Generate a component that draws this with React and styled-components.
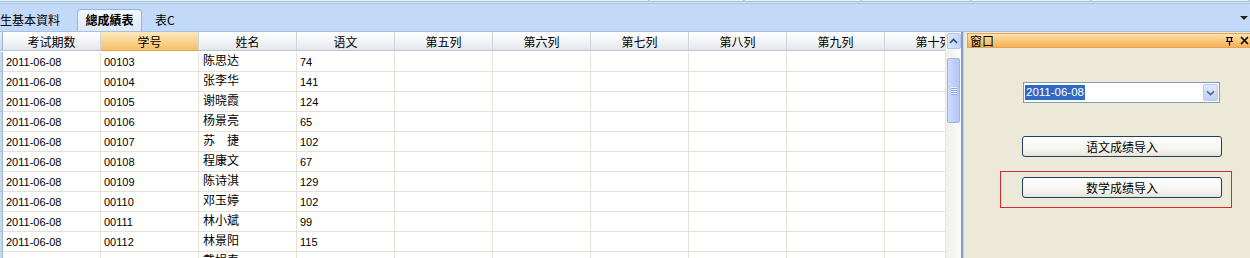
import React from "react";
import styled, { createGlobalStyle } from "styled-components";

const GlobalStyle = createGlobalStyle`
  html, body { margin: 0; padding: 0; background: #ece9d8; overflow: hidden; }
  body {
    font-family: "Liberation Sans", "Noto Sans CJK SC", sans-serif;
    font-size: 12px;
    color: #000;
  }
`;

const columns = ["考试期数", "学号", "姓名", "语文", "第五列", "第六列", "第七列", "第八列", "第九列", "第十列"];

const rows = [
  ["2011-06-08", "00103", "陈思达", "74"],
  ["2011-06-08", "00104", "张李华", "141"],
  ["2011-06-08", "00105", "谢晓霞", "124"],
  ["2011-06-08", "00106", "杨景亮", "65"],
  ["2011-06-08", "00107", "苏　捷", "102"],
  ["2011-06-08", "00108", "程康文", "67"],
  ["2011-06-08", "00109", "陈诗淇", "129"],
  ["2011-06-08", "00110", "邓玉婷", "102"],
  ["2011-06-08", "00111", "林小斌", "99"],
  ["2011-06-08", "00112", "林景阳", "115"],
  ["2011-06-08", "00113", "戴娟春", "93"],
];

const strips = [650, 95, 117, 110, 120, 158];

export default function App() {
  return (
    <Page>
      <GlobalStyle />
      <TopStrip>
        {strips.map((w, i) => (
          <StripBox key={i} style={{ width: w }} />
        ))}
      </TopStrip>

      <TabBar>
        <Tab>生基本資料</Tab>
        <Tab active>總成績表</Tab>
        <Tab>表C</Tab>
        <TabMenu />
      </TabBar>

      <Main>
        <GridArea>
          <Table>
            <Corner />
            {columns.map((c, i) => (
              <HeadCell key={c} sorted={i === 1}>{c}</HeadCell>
            ))}
            {rows.map((r, ri) => (
              <React.Fragment key={ri}>
                <RowHead />
                {columns.map((c, ci) => (
                  <Cell key={c} name={ci === 2}>{r[ci] || ""}</Cell>
                ))}
              </React.Fragment>
            ))}
          </Table>
          <ScrollBar>
            <ScrollButton>
              <svg width="9" height="6" viewBox="0 0 9 6">
                <path d="M1 5 L4.5 1.5 L8 5" fill="none" stroke="#2a4a86" strokeWidth="1.6" />
              </svg>
            </ScrollButton>
            <Thumb>
              <Grip />
              <Grip />
              <Grip />
              <Grip />
            </Thumb>
          </ScrollBar>
        </GridArea>

        <Splitter />

        <Panel>
          <TitleBar>
            <span>窗口</span>
            <TitleIcons>
              <svg width="9" height="10" viewBox="0 0 9 10">
                <path d="M1 1.5 H8 M2.5 1.5 V5.5 H6.5 V1.5 M1 5.5 H8 M4.5 5.5 V9.5" fill="none" stroke="#000" strokeWidth="1.2" />
              </svg>
              <svg width="9" height="9" viewBox="0 0 9 9">
                <path d="M1 1 L8 8 M8 1 L1 8" stroke="#000" strokeWidth="1.6" />
              </svg>
            </TitleIcons>
          </TitleBar>
          <PanelBody>
            <Combo>
              <Selected>2011-06-08</Selected>
              <ComboButton>
                <svg width="9" height="6" viewBox="0 0 9 6">
                  <path d="M1 1.2 L4.5 4.6 L8 1.2" fill="none" stroke="#4d6185" strokeWidth="1.6" />
                </svg>
              </ComboButton>
            </Combo>
            <PushButton>语文成绩导入</PushButton>
            <Highlight>
              <PushButton>数学成绩导入</PushButton>
            </Highlight>
          </PanelBody>
        </Panel>
      </Main>
    </Page>
  );
}

const Page = styled.div`
  width: 1250px;
  height: 258px;
  display: flex;
  flex-direction: column;
  overflow: hidden;
  background: #ece9d8;
`;

const TopStrip = styled.div`
  height: 4px;
  display: flex;
  background: #d3e8f3;
  border-bottom: 1px solid #a9c3dc;
  box-sizing: border-box;
`;

const StripBox = styled.div`
  flex: none;
  height: 2px;
  background: #e3f3fa;
  border-right: 2px solid #b8cfe0;
  border-bottom: 1px solid #9fbfd4;
  box-sizing: border-box;
`;

const TabBar = styled.div`
  height: 28px;
  box-sizing: border-box;
  display: flex;
  align-items: flex-end;
  background: #c2daf7;
  border-bottom: 1px solid #a7c1e2;
  position: relative;
`;

const Tab = styled.div`
  height: ${(p) => (p.active ? 22 : 20)}px;
  box-sizing: border-box;
  display: flex;
  align-items: center;
  justify-content: center;
  white-space: nowrap;
  font-family: "Noto Sans CJK SC", sans-serif;
  font-size: 12px;
  font-weight: ${(p) => (p.active ? 700 : 400)};
  padding: 0;
  margin: 0 0 2px 0;
  &:first-child { margin-right: 17px; }
  ${(p) =>
    p.active &&
    `
    width: 65px;
    margin: 0 13px 0 0;
    background: linear-gradient(#f4f8fd, #dde9f8);
    border: 1px solid #97b4d9;
    border-bottom: none;
    border-radius: 4px 4px 0 0;
    padding-bottom: 2px;
  `}
`;

const TabMenu = styled.div`
  position: absolute;
  right: 2px;
  top: 12px;
  width: 0;
  height: 0;
  border-left: 4px solid transparent;
  border-right: 4px solid transparent;
  border-top: 4px solid #222;
`;

const Main = styled.div`
  flex: 1;
  display: flex;
  min-height: 0;
`;

const GridArea = styled.div`
  width: 961px;
  display: flex;
  background: #fff;
`;

const Table = styled.div`
  width: 945px;
  overflow: hidden;
  display: grid;
  grid-template-columns: 3px repeat(10, 98px);
  grid-auto-rows: 20px;
  align-content: start;
  & > :nth-child(-n + 11) { height: 19px; }
`;

const Corner = styled.div`
  background: linear-gradient(#e6edf8, #c9d8ee);
  border-right: 1px solid #9eb6d4;
  border-bottom: 1px solid #aebfd6;
  box-sizing: border-box;
`;

const HeadCell = styled.div`
  box-sizing: border-box;
  display: flex;
  align-items: center;
  justify-content: center;
  font-family: "Noto Sans CJK SC", sans-serif;
  font-size: 12px;
  white-space: nowrap;
  overflow: hidden;
  background: ${(p) =>
    p.sorted ? "linear-gradient(#fde9c0, #f9d28c 55%, #f6c06a)" : "linear-gradient(#ffffff, #f3f4f7 50%, #e2e6ec)"};
  border-right: 1px solid #cfd4dc;
  border-bottom: 1px solid ${(p) => (p.sorted ? "#e3a64a" : "#bcc5d2")};
`;

const RowHead = styled.div`
  background: #c8d8ef;
  border-right: 1px solid #9eb6d4;
  border-bottom: 1px solid #aebfd6;
  box-sizing: border-box;
`;

const Cell = styled.div`
  box-sizing: border-box;
  display: flex;
  align-items: center;
  padding: ${(p) => (p.name ? "0 0 5px 4px" : "1px 0 0 3px")};
  font-family: ${(p) => (p.name ? '"Noto Sans CJK SC", sans-serif' : '"Liberation Sans", "Noto Sans CJK SC", sans-serif')};
  font-size: ${(p) => (p.name ? 12 : 11)}px;
  white-space: nowrap;
  overflow: hidden;
  border-right: 1px solid #e4e2d4;
  border-bottom: 1px solid #e4e2d4;
`;

const ScrollBar = styled.div`
  width: 16px;
  display: flex;
  flex-direction: column;
  align-items: center;
  background: linear-gradient(90deg, #f0efe9, #fbfbf8);
  border-left: 1px solid #e8e6dc;
  box-sizing: border-box;
`;

const ScrollButton = styled.div`
  width: 14px;
  height: 16px;
  margin-top: 1px;
  box-sizing: border-box;
  border: 1px solid #b4c6ec;
  border-radius: 2px;
  background: linear-gradient(90deg, #dbe5fb, #c4d4f6);
  display: flex;
  align-items: center;
  justify-content: center;
`;

const Thumb = styled.div`
  width: 13px;
  height: 65px;
  margin-top: 9px;
  box-sizing: border-box;
  border: 1px solid #9fb5e2;
  border-radius: 2px;
  background: linear-gradient(90deg, #cfdcfa, #bccdf6 60%, #b3c6f2);
  display: flex;
  flex-direction: column;
  align-items: center;
  justify-content: center;
  gap: 1px;
`;

const Grip = styled.div`
  width: 6px;
  height: 1px;
  background: #eef3fe;
  box-shadow: 0 1px 0 #8da5d8;
`;

const Splitter = styled.div`
  width: 2px;
  background: #7f9ccb;
  border-right: 1px solid #c8d6ea;
`;

const Panel = styled.div`
  flex: 1;
  background: #ece9d8;
  padding: 1px 0 0 3px;
  display: flex;
  flex-direction: column;
`;

const TitleBar = styled.div`
  height: 15px;
  box-sizing: border-box;
  display: flex;
  align-items: center;
  justify-content: space-between;
  padding: 0 0 0 2px;
  font-family: "Noto Sans CJK SC", sans-serif;
  font-size: 12px;
  background: linear-gradient(#ffe2ad, #fcc77c 50%, #f8b056);
  border: 1px solid #e3a558;
  border-right: none;
`;

const TitleIcons = styled.div`
  display: flex;
  align-items: center;
  gap: 6px;
  padding-right: 1px;
`;

const PanelBody = styled.div`
  display: flex;
  flex-direction: column;
  align-items: flex-start;
  padding-left: 55px;
`;

const Combo = styled.div`
  margin: 34px 0 0 1px;
  width: 197px;
  height: 21px;
  box-sizing: border-box;
  background: #fff;
  border: 1px solid #7f9db9;
  display: flex;
  align-items: center;
  justify-content: space-between;
  padding: 0 1px 0 1px;
`;

const Selected = styled.span`
  background: #316ac5;
  color: #fff;
  font-size: 11.5px;
  line-height: 15px;
  padding: 0 1px;
`;

const ComboButton = styled.div`
  width: 15px;
  height: 17px;
  box-sizing: border-box;
  border: 1px solid #b9c9ef;
  border-radius: 2px;
  background: linear-gradient(#e1e9fc, #c0d0f5);
  display: flex;
  align-items: center;
  justify-content: center;
`;

const PushButton = styled.button`
  width: 200px;
  height: 21px;
  margin-top: 33px;
  box-sizing: border-box;
  border: 1px solid #1f3f5f;
  border-radius: 3px;
  background: linear-gradient(#ffffff, #f4f3ee 70%, #e4e2d8);
  font-family: "Noto Sans CJK SC", sans-serif;
  font-size: 12px;
  color: #000;
  padding: 0;
  display: flex;
  align-items: center;
  justify-content: center;
`;

const Highlight = styled.div`
  margin: 14px 0 0 -22px;
  width: 232px;
  height: 37px;
  flex: none;
  box-sizing: border-box;
  border: 1px solid #d22b2b;
  padding: 5px 0 0 21px;
  & > button { margin-top: 0; }
`;
